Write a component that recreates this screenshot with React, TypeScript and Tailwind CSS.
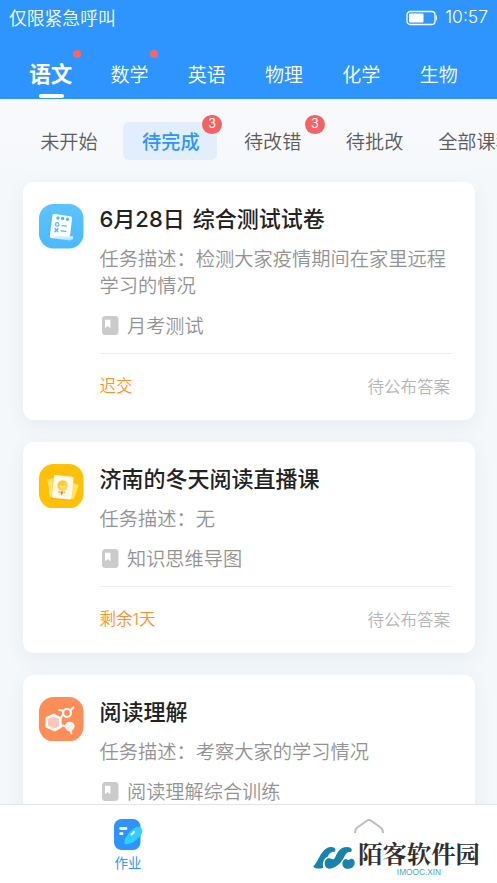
import type { ReactNode } from 'react';

interface Task {
  title: string;
  desc: string;
  tag: string;
  status: string;
  icon: ReactNode;
}

const subjects = [
  { name: '语文', dot: true },
  { name: '数学', dot: true },
  { name: '英语', dot: false },
  { name: '物理', dot: false },
  { name: '化学', dot: false },
  { name: '生物', dot: false },
];

const filters = [
  { name: '未开始', count: 0 },
  { name: '待完成', count: 3 },
  { name: '待改错', count: 3 },
  { name: '待批改', count: 0 },
  { name: '全部课程', count: 0 },
];

function PaperIcon() {
  return (
    <svg className="h-[44.5px] w-[44.5px]" viewBox="0 0 44 44" fill="none">
      <defs>
        <linearGradient id="paper-bg" x1="0" y1="0" x2="0" y2="1">
          <stop stopColor="#5bc4ff" />
          <stop offset="1" stopColor="#4cb8ff" />
        </linearGradient>
        <linearGradient id="paper-roll" x1="0" y1="0" x2="0" y2="1">
          <stop stopColor="#fff" />
          <stop offset="1" stopColor="#a9dcff" />
        </linearGradient>
      </defs>
      <rect width="44" height="44" rx="14.5" fill="url(#paper-bg)" />
      <path d="M13 10.5 L31 12.5 Q33 12.8 32.8 15 L31 34.5 L10 31 Z" fill="#2fa2f2" opacity="0.35" />
      <path d="M15.2 9.8 L31 12 Q33 12.3 32.7 14.3 L30.8 31.5 L13 33.8 Q10.3 33.5 10.8 30.6 L13.2 11.3 Q13.5 9.6 15.2 9.8Z" fill="#fff" />
      <path d="M15.5 30.2 L33.8 32.2 Q33.8 36 30.8 36 L13.2 33.9 Q15.5 33.2 15.5 30.2Z" fill="url(#paper-roll)" />
      <g fill="#53b9fb">
        <circle cx="18.7" cy="13.8" r="1.7" />
        <circle cx="23.4" cy="14.3" r="1.7" />
        <circle cx="28.2" cy="15" r="1.7" />
      </g>
      <g stroke="#53b9fb" strokeWidth="1.3" strokeLinecap="round">
        <circle cx="18" cy="20.2" r="1.7" />
        <path d="M22.8 21.3 L27 21.8 M21.8 26.6 L26.5 27.1 M15.8 24.2 L18.7 27.4 M18.9 24.2 L15.6 27.4" />
      </g>
    </svg>
  );
}

function CardsIcon() {
  return (
    <svg className="h-[44.5px] w-[44.5px]" viewBox="0 0 44 44" fill="none">
      <defs>
        <linearGradient id="medal" x1="0" y1="0" x2="1" y2="1">
          <stop stopColor="#ffc10d" />
          <stop offset="1" stopColor="#ffdf70" />
        </linearGradient>
      </defs>
      <rect width="44" height="44" rx="14.5" fill="#ffc107" />
      <rect x="9.5" y="14" width="12" height="18" rx="1" transform="rotate(-7 16 24)" fill="#ffe36c" />
      <rect x="25" y="17.5" width="12" height="15" rx="1" transform="rotate(20 29 26)" fill="#ffe55c" />
      <path d="M14 12 L34 14 L32 36.5 L12 34.5Z" fill="#f29d00" opacity="0.3" />
      <rect x="13.7" y="11.6" width="19.5" height="22.8" rx="1.8" transform="rotate(6 23 23)" fill="#fff8ec" />
      <circle cx="23.4" cy="21.3" r="5.2" fill="url(#medal)" />
      <path d="M20.8 22 Q23.4 24 25.8 22" stroke="#fff3c4" strokeWidth="0.9" />
      <path d="M19 27.4 L22 28.4 M24.5 28.5 L26 27.4" stroke="#ffc928" strokeWidth="1.8" />
      <path d="M22.2 27 V31 M23.3 27 V29.6" stroke="#ff7262" strokeWidth="1" />
    </svg>
  );
}

function MoleculeIcon() {
  return (
    <svg className="h-[44.5px] w-[44.5px]" viewBox="0 0 44 44" fill="none">
      <rect width="44" height="44" rx="14.5" fill="#ff8d58" />
      <g stroke="#fff" strokeLinecap="round" strokeLinejoin="round">
        <path d="M14.3 17.7 L21 20.9 L21.3 29.6 L15.5 32.8 L7.6 29.3 L7.8 20.8Z" fill="#ffc8be" strokeWidth="2.4" />
        <circle cx="27.7" cy="15.8" r="3.9" strokeWidth="2.1" />
        <path d="M31.2 13.1 L34 10.2 M24 13.5 L20 12.8 M23.7 17.7 L21.3 21 M22 27.7 L26.5 29.3 M31.2 32 L32 36" strokeWidth="1.9" />
      </g>
      <circle cx="30.4" cy="29.6" r="4.4" fill="#fff0ed" />
      <path d="M26.5 28 Q28 24.6 31.7 25.3 Q35 26.2 34.5 30" stroke="#fff" strokeWidth="1.3" />
    </svg>
  );
}

const tasks: Task[] = [
  {
    title: '6月28日 综合测试试卷',
    desc: '任务描述：检测大家疫情期间在家里远程学习的情况',
    tag: '月考测试',
    status: '迟交',
    icon: <PaperIcon />,
  },
  {
    title: '济南的冬天阅读直播课',
    desc: '任务描述：无',
    tag: '知识思维导图',
    status: '剩余1天',
    icon: <CardsIcon />,
  },
  {
    title: '阅读理解',
    desc: '任务描述：考察大家的学习情况',
    tag: '阅读理解综合训练',
    status: '剩余1天',
    icon: <MoleculeIcon />,
  },
];

function Header() {
  return (
    <header className="h-[99px] shrink-0 bg-[#2e95ff] text-white shadow-[0_1px_4px_rgba(100,130,160,0.16)]">
      <div className="flex h-[35px] items-center justify-between pr-[9px] pl-[9px] font-[350]">
        <span className="text-[17.8px]">仅限紧急呼叫</span>
        <div className="flex items-center gap-[7px]">
          <svg className="h-4 w-8" viewBox="0 0 32 16" fill="none">
            <rect x="1" y="1.5" width="28" height="13" rx="3.2" stroke="white" strokeWidth="1.3" />
            <rect x="3" y="3.5" width="14.5" height="9" rx="1" fill="white" />
            <path d="M30 4.5 Q32 8 30 11.5Z" fill="white" />
          </svg>
          <span className="font-['Inter','Noto_Sans_CJK_SC',sans-serif] text-[17.5px] font-light">10:57</span>
        </div>
      </div>
      <nav className="flex h-16 pl-[13px]">
        {subjects.map((s, i) => (
          <button key={s.name} className="relative flex h-16 w-[77.3px] shrink-0 items-center justify-center pt-[13px]">
            <span className={i === 0 ? 'pr-[2px] text-[21.5px] font-bold' : 'pt-[1px] pl-[1px] text-[19px] font-[350]'}>{s.name}</span>
            {s.dot && <span className="absolute top-[15px] right-[9.5px] h-2 w-2 rounded-full bg-[#f56767]" />}
            {i === 0 && <span className="absolute bottom-[1px] h-1 w-[25px] rounded-full bg-white" />}
          </button>
        ))}
      </nav>
    </header>
  );
}

function Filters() {
  return (
    <nav className="flex h-[83px] shrink-0 items-start bg-linear-to-b from-[#f8f9fc] to-[#f5f8fa] pt-[23px] pl-[18px]">
      {filters.map((f, i) => (
        <button key={f.name} className="flex w-[101.9px] shrink-0 justify-center">
          <span
            className={`relative flex h-[38px] w-[94px] items-center justify-center rounded-md text-[19.2px] whitespace-nowrap ${
              i === 1 ? 'right-[1px] bg-[#e2eefb] pl-[2px] font-medium text-[#2e95ff]' : 'font-[350] text-[#5c5c5c]'
            }`}
          >
            {f.name}
            {f.count > 0 && (
              <span className="absolute -top-[7.5px] -right-[5px] flex h-[19.5px] w-[19.5px] items-center justify-center rounded-full bg-[#f46363] font-['Inter',sans-serif] text-[12.5px] font-normal text-white">
                {f.count}
              </span>
            )}
          </span>
        </button>
      ))}
    </nav>
  );
}

function TaskCard({ task }: { task: Task }) {
  return (
    <article className="flex shrink-0 rounded-[11px] bg-white pt-[22px] pr-[22.5px] pl-[16.5px] shadow-[0_5px_18px_rgba(95,130,165,0.1)]">
      <div className="w-[60.5px] shrink-0">{task.icon}</div>
      <div className="flex-1">
        <h2 className="h-[41px] font-['Inter','Noto_Sans_CJK_SC',sans-serif] text-[22px] leading-[30px] font-medium [word-spacing:2px] text-[#222]">
          {task.title}
        </h2>
        <p className="text-[19.25px] leading-[26.5px] font-[350] text-[#939393]">{task.desc}</p>
        <div className="mt-[13.5px] flex h-[28px] items-center gap-[8.5px] pl-[2px] text-[19.2px] font-[350] text-[#939393]">
          <svg className="h-[19px] w-[17px]" viewBox="0 0 17 19" fill="none">
            <rect width="16.5" height="19" rx="3.5" fill="#cbcbcb" />
            <path d="M3 3.8 H8.4 V12.3 L5.7 10 L3 12.3Z" fill="white" />
          </svg>
          {task.tag}
        </div>
        <div className="mt-[13px] flex h-[67px] items-center justify-between border-t border-[#eceef0] pr-[2px] text-[16.5px]">
          <span className="font-['Inter','Noto_Sans_CJK_SC',sans-serif] font-[350] text-[#ff9028]">{task.status}</span>
          <span className="font-[350] text-[#b5b5b5]">待公布答案</span>
        </div>
      </div>
    </article>
  );
}

function BottomNav() {
  return (
    <footer className="relative flex h-[79px] shrink-0 border-t border-[#e2e4e7] bg-white">
      <button className="flex w-[256px] flex-col items-center pt-[14px] text-[#2e95ff]">
        <svg className="h-8 w-[30px] shrink-0" viewBox="0 0 30 32" fill="none">
          <rect x="1" width="26.5" height="31" rx="7.5" fill="#2e92ff" />
          <path d="M7.7 9.5 H13 M7.7 14.7 H9" stroke="white" strokeWidth="2.8" strokeLinecap="round" />
          <path d="M20 10 Q25 6 28 9 Q31 12 27.5 16.5 Q22 24 13 25.5 Q11 25.8 11.3 22.5 Q11.8 17.5 20 10Z" fill="#2cd1ff" />
          <path d="M18.5 15.5 L21 13" stroke="white" strokeWidth="2" strokeLinecap="round" />
        </svg>
        <span className="text-[13.5px] leading-[22px]">作业</span>
      </button>
      <div className="flex flex-1 flex-col">
        <svg className="mt-[13px] ml-[97px] h-[16px] w-[32px]" viewBox="0 0 32 16" fill="none">
          <path d="M2 15 Q2 11 5 9 L13.5 3 Q16 1 18.5 3 L27 9 Q30 11 30 15" stroke="#bdbdbd" strokeWidth="2" />
        </svg>
      </div>
      {/* Site mark over the bar */}
      <div className="absolute top-[31px] left-[313px] flex items-start">
        <svg className="mt-[10px] h-[24px] w-[42px]" viewBox="15 28 126 72" fill="#1784ac">
          <path d="M16 88 C28 84 40 31 68 31 C80 31 86 38 80 45 C68 44 63 52 59 60 C47 66 42 78 46 93 C36 97 18 98 16 88Z" />
          <path d="M51 86 C48 72 56 64 64 65 C72 67 76 71 81 63 C89 44 98 31 117 31 C130 31 136 40 128 46 C116 44 112 54 107 64 C96 82 82 96 62 96 Q53 95 51 86Z" />
          <path d="M104 75 Q109 65 116 68 Q121 72 127 67 C136 64 141 72 140 81 C137 93 126 97 114 96 Q100 92 104 75Z" />
        </svg>
        <div className="ml-[3px] flex flex-col items-center">
          <span className="font-['Noto_Serif_CJK_SC','Noto_Sans_CJK_SC',serif] text-[24.4px] leading-[34px] font-bold whitespace-nowrap text-[#303030]">
            陌客软件园
          </span>
          <span className="-mt-[3px] font-['Liberation_Sans',sans-serif] text-[8.3px] leading-[10px] text-[#4aa6c6]">IMOOC.XIN</span>
        </div>
      </div>
    </footer>
  );
}

export default function App() {
  return (
    <div className="flex h-[883px] w-[497px] flex-col overflow-hidden bg-[#f5f8fa] font-['Noto_Sans_CJK_SC',sans-serif]">
      <Header />
      <Filters />
      <main className="-mt-5 flex min-h-0 flex-1 flex-col gap-[22px] overflow-hidden px-[22.5px] pt-5">
        {tasks.map(task => (
          <TaskCard key={task.title} task={task} />
        ))}
      </main>
      <BottomNav />
    </div>
  );
}
